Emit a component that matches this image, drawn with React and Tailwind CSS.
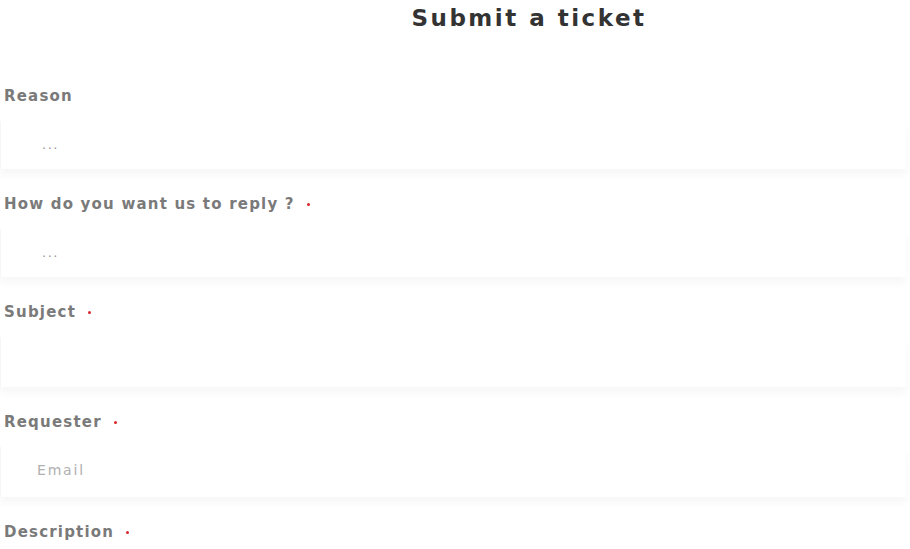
import React from "react";

const font = { fontFamily: '"DejaVu Sans", "Liberation Sans", sans-serif' };

function Field({ label, required, placeholder, placeholderClass, h }) {
  return (
    <div className="flex flex-col">
      <div className="h-[24px] flex items-center pl-[4px] text-[15px] font-bold text-[#7a7a7a] tracking-[1.2px]">
        <span>{label}</span>
        {required && <span className="ml-[12px] inline-block w-[3px] h-[3px] rounded-full bg-[#d9262c]" />}
      </div>
      <div
        className={`mt-[13px] ${h} w-[906px] bg-white flex items-center border-l border-[#f6f6f6] shadow-[0_6px_8px_rgba(0,0,0,0.035)]`}
      >
        {placeholder && <span className={placeholderClass}>{placeholder}</span>}
      </div>
    </div>
  );
}

export default function App() {
  return (
    <div className="w-[910px] h-[549px] bg-white overflow-hidden" style={font}>
      <div className="h-[36px] flex items-center justify-center pl-[148px]">
        <h1 className="text-[23px] font-bold text-[#333] tracking-[2.5px]">Submit a ticket</h1>
      </div>
      <div className="mt-[48px] flex flex-col gap-[23px]">
        <Field label="Reason" placeholder="..." placeholderClass="ml-[41px] text-[13px] text-[#999] tracking-[1.5px]" h="h-[48px]" />
        <Field label="How do you want us to reply ?" required placeholder="..." placeholderClass="ml-[41px] text-[13px] text-[#999] tracking-[1.5px]" h="h-[48px]" />
        <Field label="Subject" required h="h-[50px]" />
        <Field label="Requester" required placeholder="Email" placeholderClass="ml-[36px] -mt-[3px] text-[14px] text-[#b0b0b0] tracking-[1.8px]" h="h-[50px]" />
        <Field label="Description" required h="h-[48px]" />
      </div>
    </div>
  );
}
